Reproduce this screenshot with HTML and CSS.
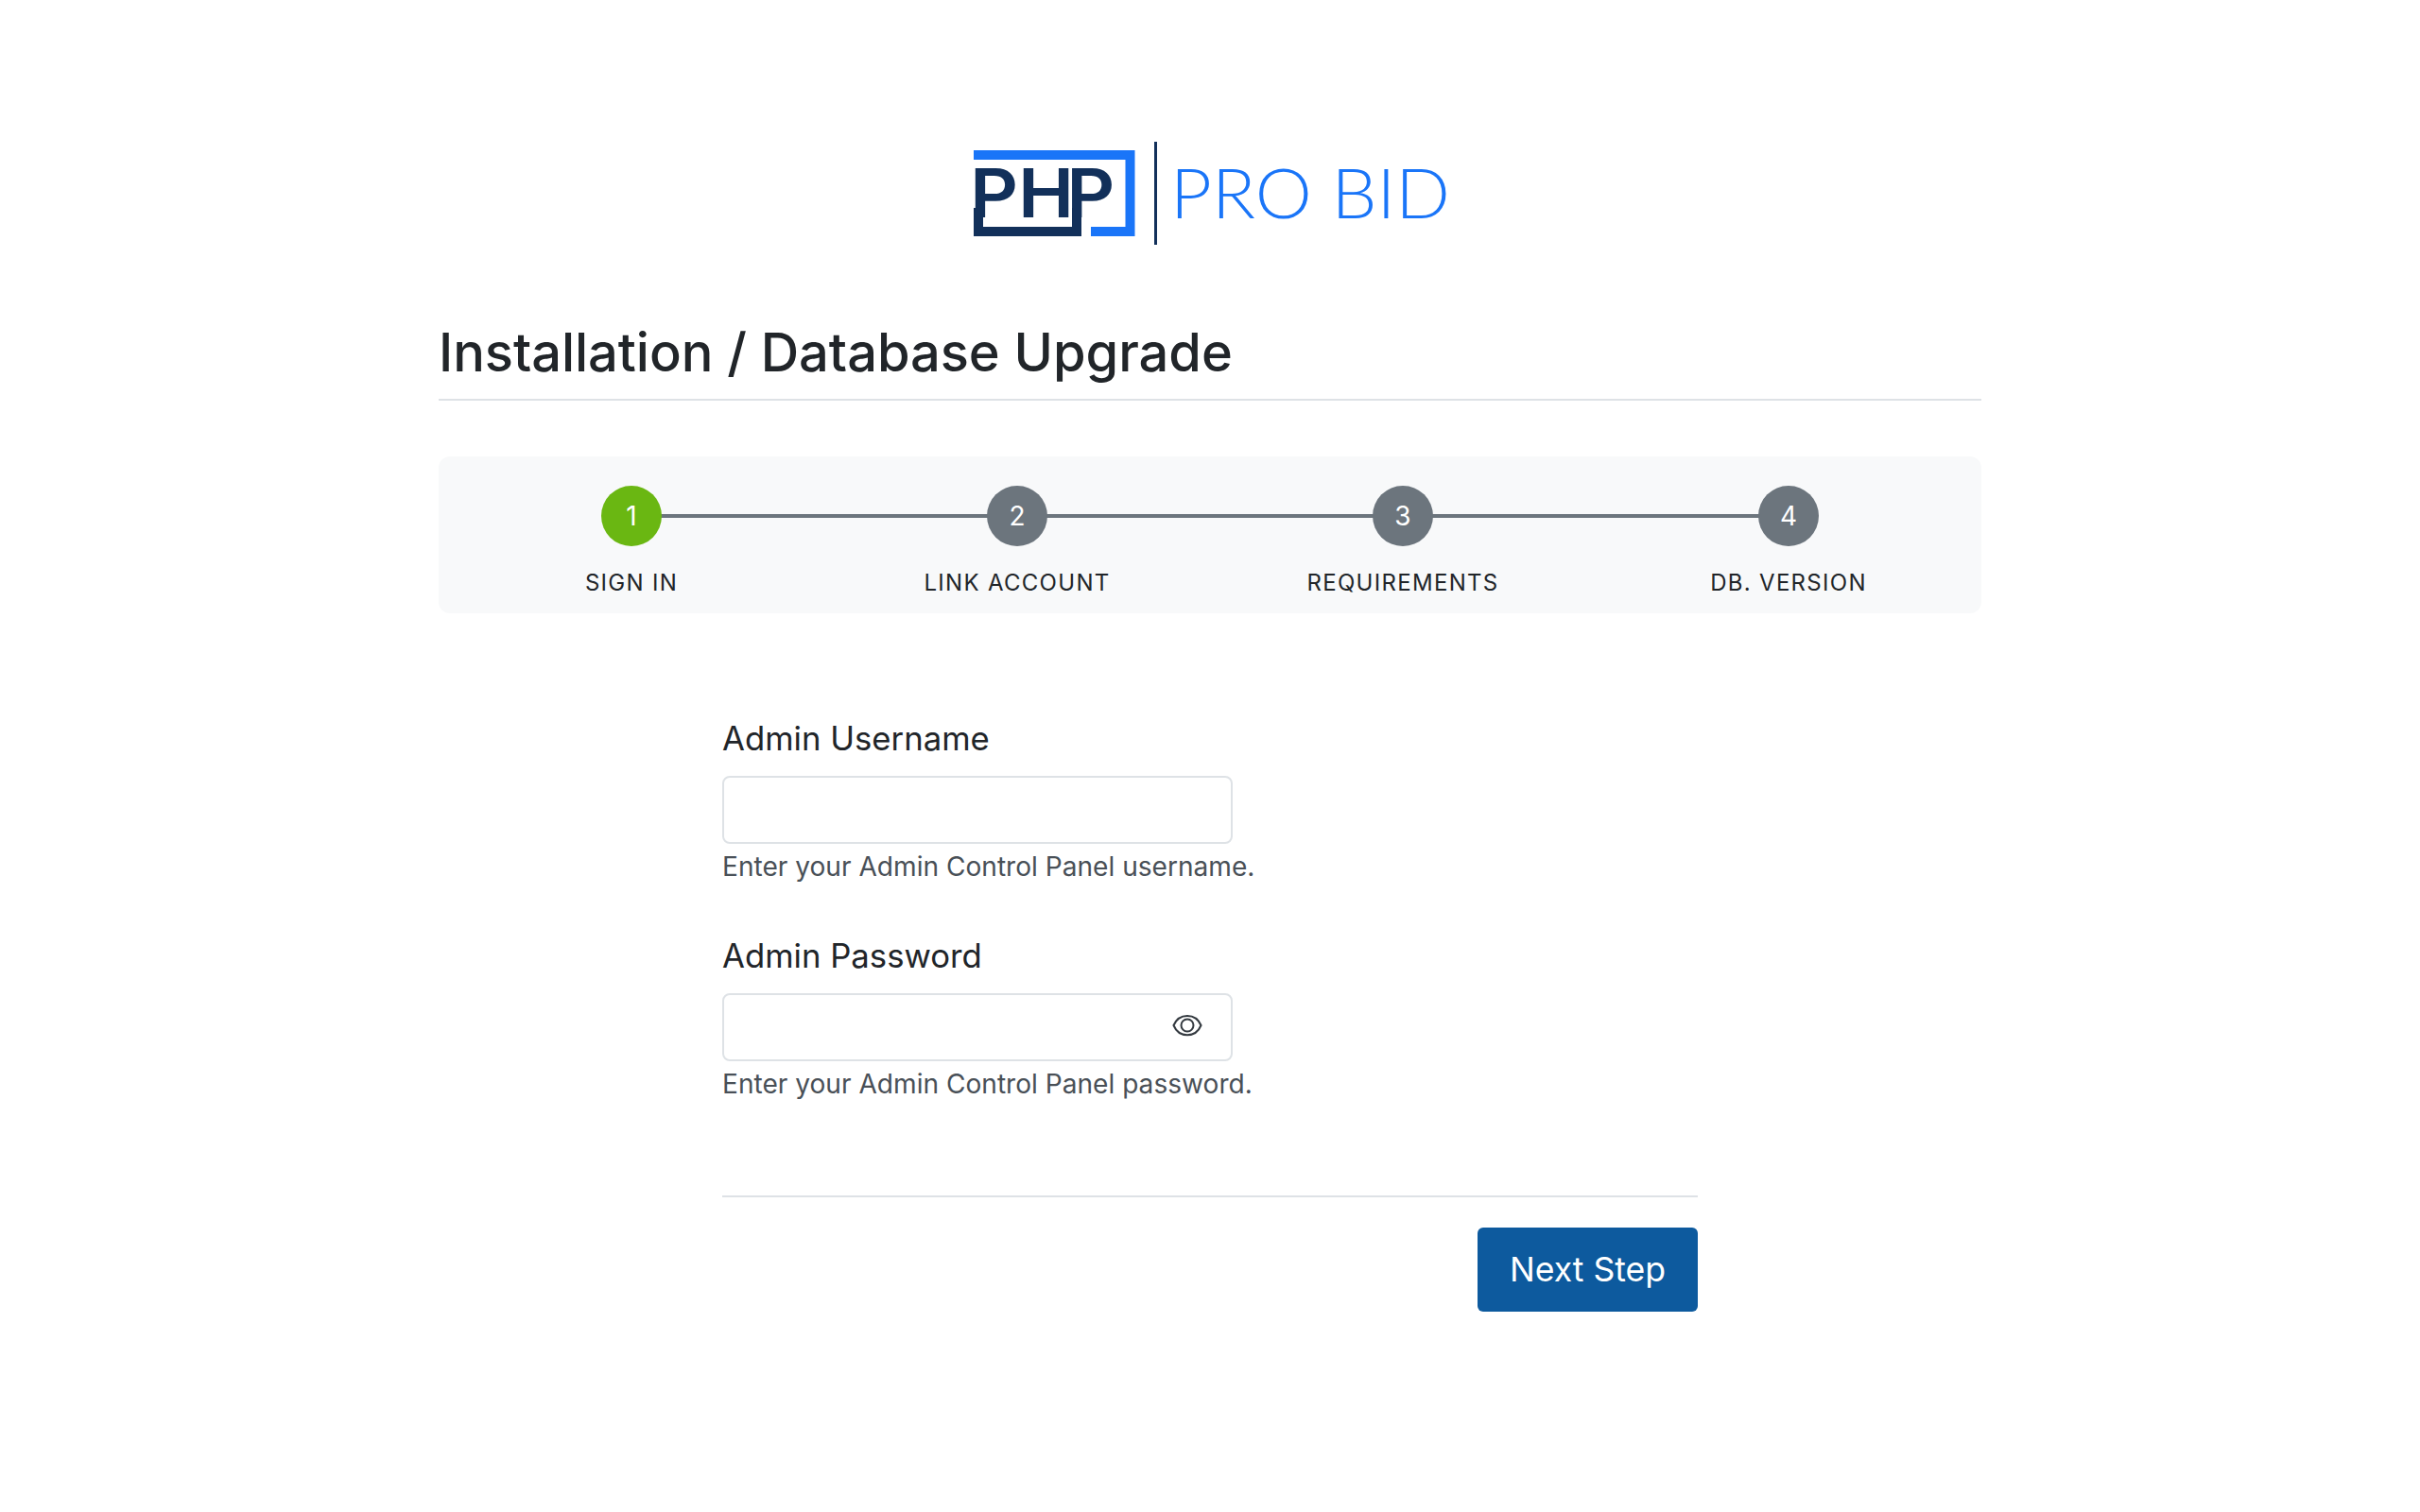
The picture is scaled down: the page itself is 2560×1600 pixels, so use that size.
FILE: index.html
```html
<!DOCTYPE html>
<html lang="en">
<head>
  <meta charset="UTF-8" />
  <title>Installation / Database Upgrade</title>
  <link rel="stylesheet" href="styles.css">
</head>
<body>

  <div class="logo">
    <svg width="500" height="110" viewBox="0 0 500 110">
      <path d="M0 14H165.500V95H124" class="frame-blue" />
      <path d="M5 70V95H109V70" class="frame-dark" />
      <text x="-3.700 42.700 89.300" y="80" transform="scale(1.1 1)" class="logo-php">PHP</text>
      <rect x="191" y="0" width="3" height="109" fill="#12305a" />
      <text x="208" y="81" textLength="296" lengthAdjust="spacingAndGlyphs" class="logo-name">PRO BID</text>
    </svg>
  </div>

  <div class="container">
    <h1 class="page-title">Installation / Database Upgrade</h1>

    <div class="steps">
      <div class="step active">
        <div class="step-num">1</div>
        <div class="step-label">SIGN IN</div>
      </div>
      <div class="step">
        <div class="step-num">2</div>
        <div class="step-label">LINK ACCOUNT</div>
      </div>
      <div class="step">
        <div class="step-num">3</div>
        <div class="step-label">REQUIREMENTS</div>
      </div>
      <div class="step">
        <div class="step-num">4</div>
        <div class="step-label">DB. VERSION</div>
      </div>
    </div>

    <form class="install-form">
      <div class="field">
        <label for="username">Admin Username</label>
        <div class="input-wrap">
          <input type="text" id="username" />
        </div>
        <div class="help">Enter your Admin Control Panel username.</div>
      </div>

      <div class="field">
        <label for="password">Admin Password</label>
        <div class="input-wrap">
          <input type="password" id="password" />
          <svg class="eye" width="32" height="24" viewBox="0 0 32 24">
            <path d="M1.500 12C7 -1.500 25 -1.500 30.500 12C25 25.500 7 25.500 1.500 12Z" />
            <circle cx="16" cy="12" r="6.500" />
          </svg>
        </div>
        <div class="help">Enter your Admin Control Panel password.</div>
      </div>

      <div class="form-footer">
        <button type="button" class="btn-next">Next Step</button>
      </div>
    </form>
  </div>

</body>
</html>
```
FILE: styles.css
```css
* { box-sizing: border-box; }

body {
  margin: 0;
  font-family: Inter, "Liberation Sans", sans-serif;
  background: #fff;
  color: #212529;
}

.logo {
  display: flex;
  justify-content: center;
  padding-top: 150px;
}

.logo svg {
  display: block;
  overflow: visible;
}

.frame-blue {
  fill: none;
  stroke: #1a75f8;
  stroke-width: 10;
}

.frame-dark {
  fill: none;
  stroke: #12305a;
  stroke-width: 10;
}

.logo-php {
  font-family: Inter, sans-serif;
  font-weight: 600;
  font-size: 72px;
  fill: #12305a;
}

.logo-name {
  font-family: Lato, sans-serif;
  font-weight: 300;
  font-size: 73px;
  fill: #1a75f8;
}

.container {
  width: 1632px;
  margin: 0 auto;
}

.page-title {
  margin: 79px 0 0;
  padding-bottom: 15px;
  font-size: 56px;
  font-weight: 500;
  letter-spacing: -0.05px;
  line-height: 68px;
  border-bottom: 2px solid #dee2e6;
}

.steps {
  display: grid;
  grid-template-columns: repeat(4, 1fr);
  height: 166px;
  margin-top: 59px;
  padding-top: 31px;
  background: #f8f9fa;
  border-radius: 12px;
}

.step {
  position: relative;
  text-align: center;
}

.step:not(:last-child)::after {
  content: "";
  position: absolute;
  top: 30px;
  left: 50%;
  width: 100%;
  height: 4px;
  background: #6c757d;
}

.step-num {
  position: relative;
  z-index: 1;
  width: 64px;
  height: 64px;
  margin: 0 auto;
  border-radius: 50%;
  background: #6c757d;
  color: #fff;
  font-size: 28px;
  line-height: 64px;
}

.step.active .step-num {
  background: #6ab712;
}

.step-label {
  margin-top: 23px;
  font-size: 24px;
  line-height: 32px;
  letter-spacing: 1.3px;
}

.install-form {
  width: 1032px;
  margin: 0 auto;
  padding-top: 110px;
}

.field {
  margin-bottom: 53px;
}

.field label {
  display: block;
  font-size: 34.7px;
  line-height: 44px;
  margin-bottom: 18px;
}

.input-wrap {
  position: relative;
  width: 540px;
}

.input-wrap input {
  display: block;
  width: 100%;
  height: 72px;
  border: 2px solid #dee2e6;
  border-radius: 8px;
  background: #fff;
}

.eye {
  position: absolute;
  top: 22px;
  right: 32px;
}

.eye path, .eye circle {
  fill: none;
  stroke: #343a40;
  stroke-width: 2;
}

.help {
  margin-top: 5px;
  font-size: 28.1px;
  line-height: 38px;
  color: #495057;
}

.form-footer {
  display: flex;
  justify-content: flex-end;
  margin-top: 99px;
  padding-top: 32px;
  border-top: 2px solid #dee2e6;
}

.btn-next {
  width: 233px;
  height: 89px;
  border: none;
  border-radius: 6px;
  background: #0d5a9e;
  color: #fff;
  font-family: inherit;
  font-size: 35.6px;
}
```
